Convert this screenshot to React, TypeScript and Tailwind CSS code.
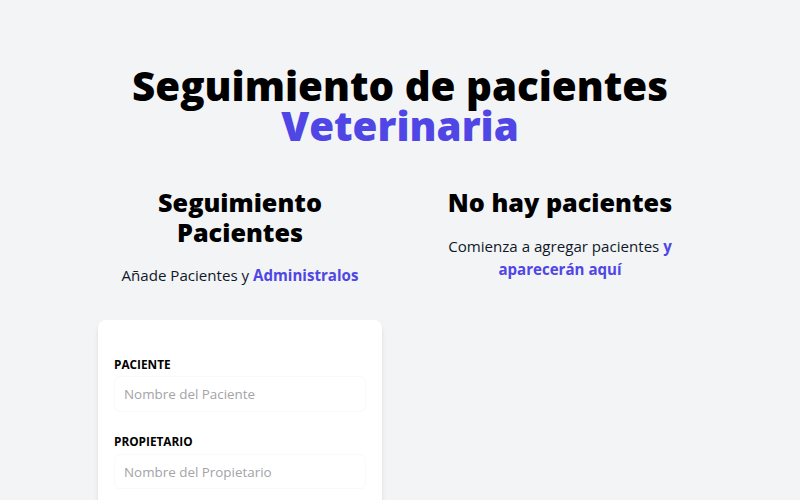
function Campo({ label, placeholder, type = "text" }: { label: string; placeholder: string; type?: string }) {
  return (
    <div className="mb-[21px]">
      <label className="block text-[11.8px] leading-[16.8px] text-black uppercase font-bold">
        {label}
      </label>
      <input
        type={type}
        placeholder={placeholder}
        className="border-[1.7px] border-[#f9f9fa] w-full px-[9px] pt-[7px] pb-[6.4px] mt-[4px] text-[13.4px] leading-[20.2px] placeholder-[#a3a3a8] rounded-md outline-none"
      />
    </div>
  );
}

function Formulario() {
  return (
    <div className="w-[284px]">
      <h2 className="text-[25.2px] leading-[30.2px] font-extrabold text-center text-black">
        Seguimiento Pacientes
      </h2>
      <p className="text-[15.1px] leading-[23.5px] mt-[17px] text-center text-gray-900">
        Añade Pacientes y{" "}
        <span className="text-[#4f46e5] font-bold">Administralos</span>
      </p>
      <form className="bg-white shadow-md rounded-lg pt-[36px] pb-[34px] px-[16px] mt-[32px] mb-10">
        <Campo label="Paciente" placeholder="Nombre del Paciente" />
        <Campo label="Propietario" placeholder="Nombre del Propietario" />
        <Campo label="Email" placeholder="Email Contacto Propietario" type="email" />
        <Campo label="Alta" placeholder="" type="date" />
      </form>
    </div>
  );
}

function ListadoPacientes() {
  return (
    <div className="w-[284px]">
      <h2 className="text-[25.2px] leading-[30.2px] font-extrabold text-center text-black">
        No hay pacientes
      </h2>
      <p className="text-[15.1px] leading-[23.5px] mt-[18px] text-center text-gray-900">
        Comienza a agregar pacientes{" "}
        <span className="text-[#4f46e5] font-bold">y aparecerán aquí</span>
      </p>
    </div>
  );
}

export default function App() {
  return (
    <div
      className="min-h-screen bg-[#f3f4f6]"
      style={{ fontFamily: '"Open Sans", sans-serif' }}
    >
      <div className="pt-[66px]">
        <h1 className="text-[40.3px] leading-[40.3px] font-extrabold text-center text-black">
          Seguimiento de pacientes
          <br />
          <span className="text-[#4f46e5]">Veterinaria</span>
        </h1>
        <div className="mt-[40px] flex justify-center gap-9">
          <Formulario />
          <ListadoPacientes />
        </div>
      </div>
    </div>
  );
}
